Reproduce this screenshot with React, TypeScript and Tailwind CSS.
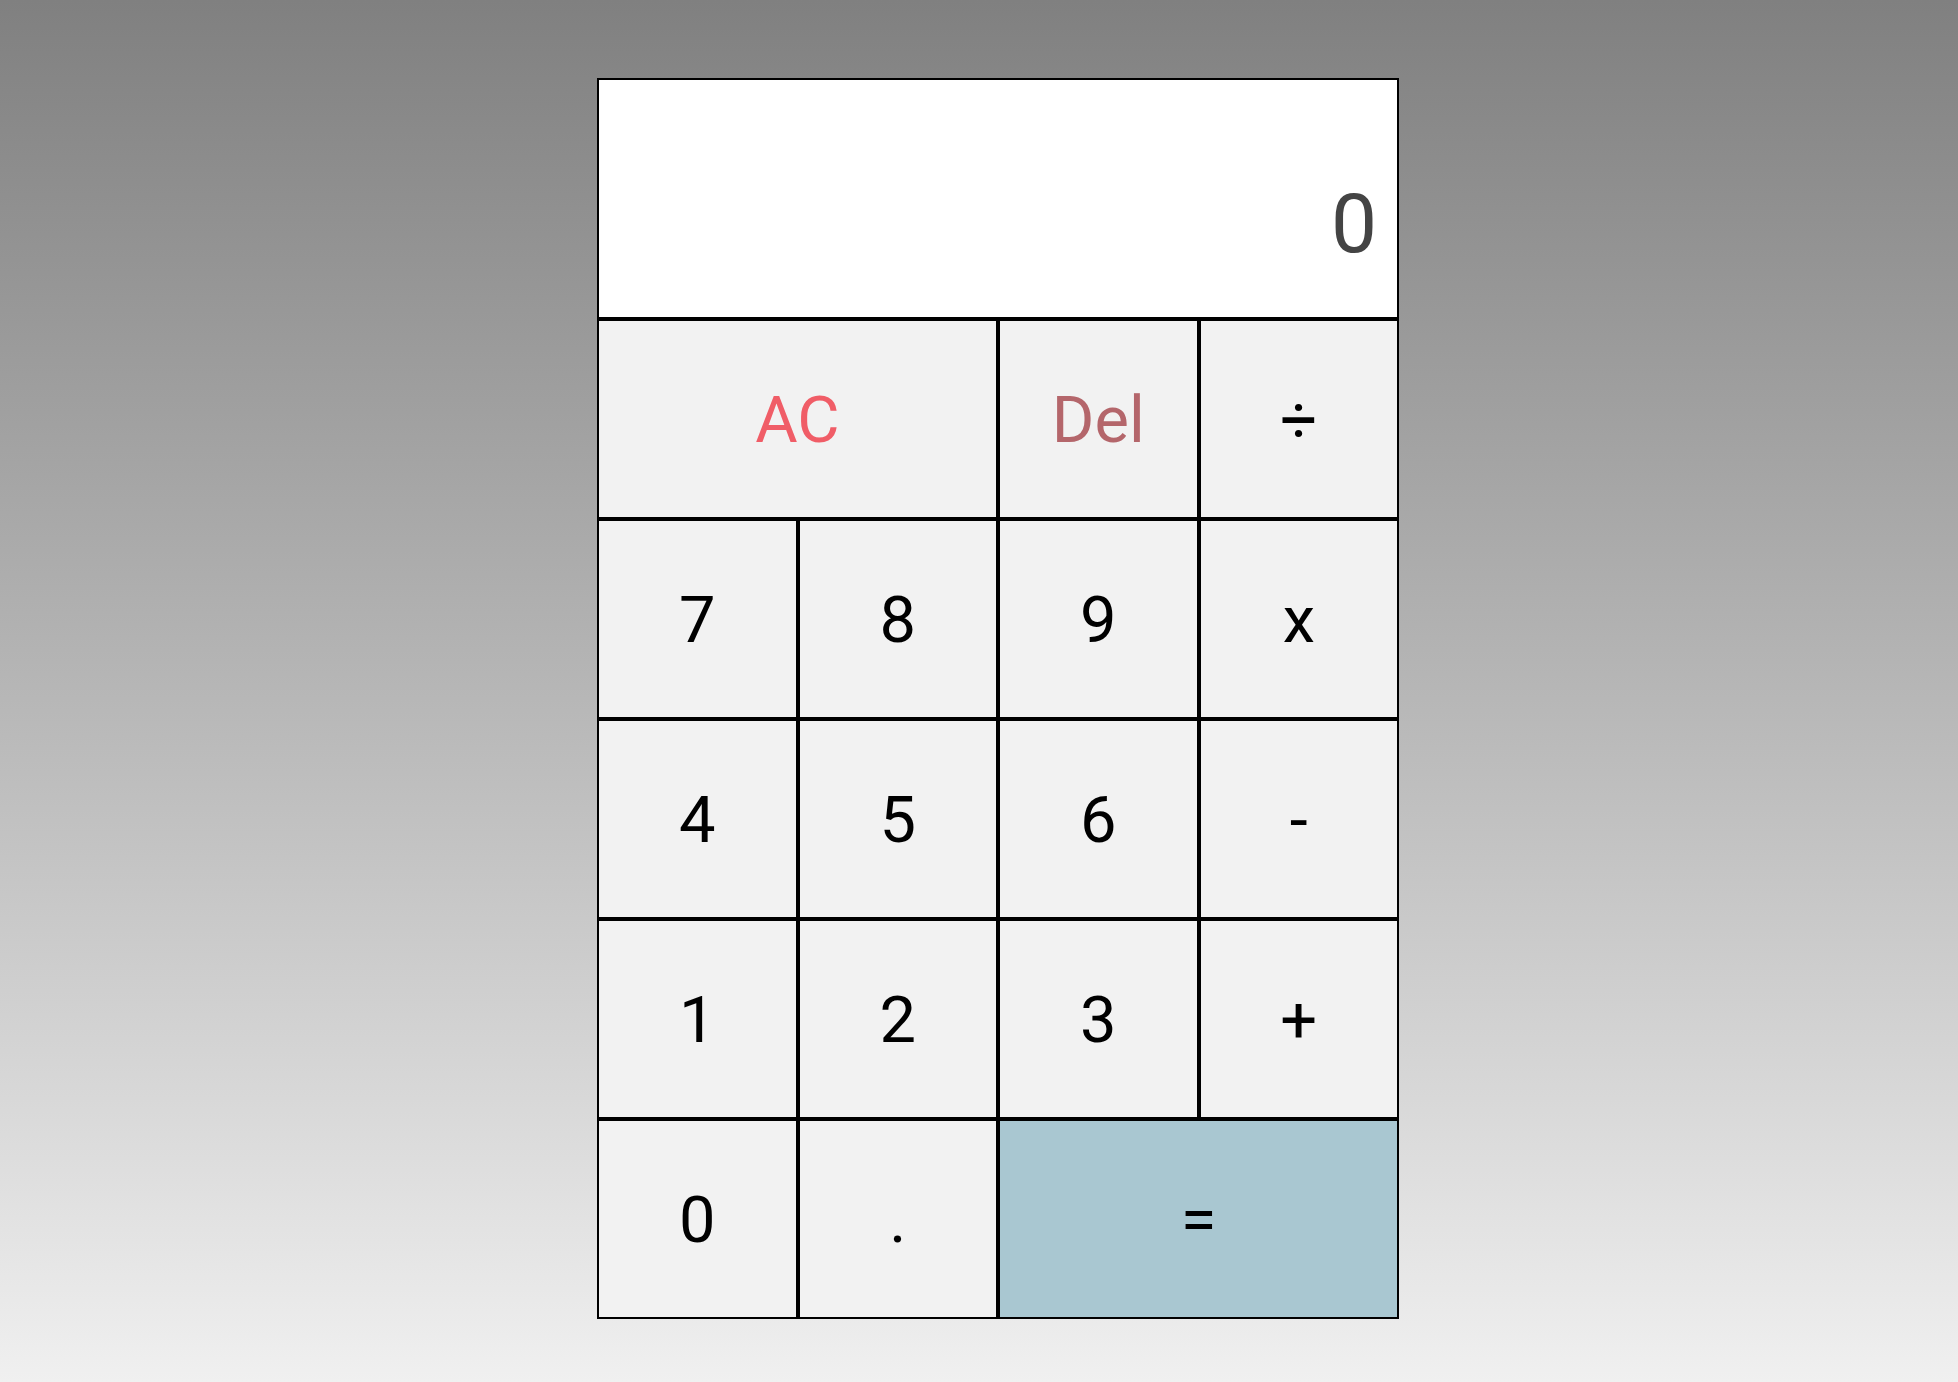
import React from "react";

const keys: { label: string; span?: boolean; tone?: "ac" | "del" | "eq" }[] = [
  { label: "AC", span: true, tone: "ac" },
  { label: "Del", tone: "del" },
  { label: "÷" },
  { label: "7" },
  { label: "8" },
  { label: "9" },
  { label: "x" },
  { label: "4" },
  { label: "5" },
  { label: "6" },
  { label: "-" },
  { label: "1" },
  { label: "2" },
  { label: "3" },
  { label: "+" },
  { label: "0" },
  { label: "." },
  { label: "=", span: true, tone: "eq" },
];

function Key({ label, span, tone }: { label: string; span?: boolean; tone?: "ac" | "del" | "eq" }) {
  const color =
    tone === "ac" ? "text-[#f05d67]" : tone === "del" ? "text-[#b4666b]" : "text-black";
  const bg = tone === "eq" ? "bg-[#a9c7d1]" : "bg-[#f2f2f2]";
  return (
    <button
      className={`${span ? "col-span-2" : ""} ${bg} ${color} flex h-[200px] items-center justify-center border-2 border-black pt-[2px] text-[65px] leading-none cursor-pointer`}
    >
      {label}
    </button>
  );
}

export default function App() {
  return (
    <div
      className="flex min-h-screen justify-center bg-gradient-to-b from-[#808080] to-[#f0f0f0] pl-[38px] pt-[78px]"
      style={{ fontFamily: "Roboto, 'Liberation Sans', sans-serif" }}
    >
      <div className="grid h-fit w-[802px] grid-cols-4">
        <div className="col-span-4 flex h-[241px] flex-col items-end justify-end border-2 border-black bg-white px-[20px] pb-[52px]">
          <div className="h-[40px]" />
          <div className="text-[82px] leading-none text-[#444444]">0</div>
        </div>
        {keys.map((k) => (
          <Key key={k.label} {...k} />
        ))}
      </div>
    </div>
  );
}
